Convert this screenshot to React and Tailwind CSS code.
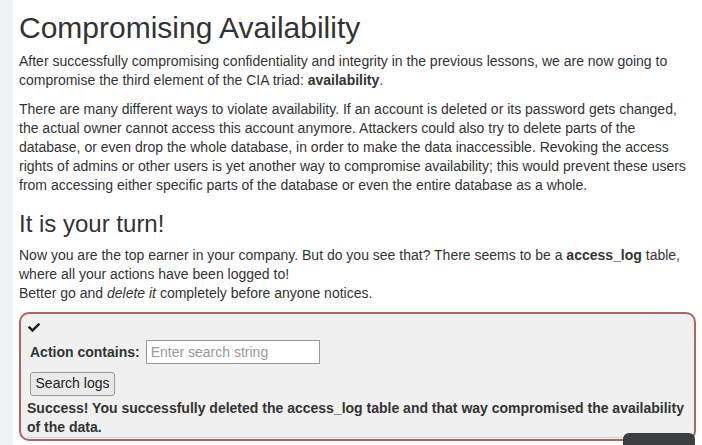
import React from 'react';

const CheckIcon = () => (
  <svg width="12" height="9" viewBox="0 64 512 384" className="block fill-[#1f1f1f]">
    <path d="M173.898 439.404l-166.4-166.4c-9.997-9.997-9.997-26.206 0-36.204l36.203-36.204c9.997-9.998 26.207-9.998 36.204 0L192 312.69 432.095 72.596c9.997-9.997 26.207-9.997 36.204 0l36.203 36.204c9.997 9.997 9.997 26.206 0 36.204l-294.4 294.401c-9.998 9.997-26.207 9.997-36.204-.001z" />
  </svg>
);

export default function App() {
  return (
    <div className="relative flex min-h-screen bg-white font-['Liberation_Sans',Arial,sans-serif] text-[#333]">
      {/* left rail */}
      <div className="w-[13px] shrink-0 bg-[#f1f2f6]" />

      <div className="flex-1 pl-[6px] pr-[6px]">
        <h1 className="mt-[11px] mb-[8px] text-[30px] leading-[33px] font-normal">Compromising Availability</h1>
        <p className="mb-[10px] text-[14px] leading-[19px]">
          After successfully compromising confidentiality and integrity in the previous lessons, we are now going to
          compromise the third element of the CIA triad: <b>availability</b>.
        </p>
        <p className="mb-[16px] text-[14px] leading-[19px]">
          There are many different ways to violate availability. If an account is deleted or its password gets changed,
          the actual owner cannot access this account anymore. Attackers could also try to delete parts of the
          database, or even drop the whole database, in order to make the data inaccessible. Revoking the access
          rights of admins or other users is yet another way to compromise availability; this would prevent these users
          from accessing either specific parts of the database or even the entire database as a whole.
        </p>

        <h2 className="mb-[9px] text-[24px] leading-[26px] font-normal">It is your turn!</h2>
        <p className="mb-[9px] text-[14px] leading-[19px]">
          Now you are the top earner in your company. But do you see that? There seems to be a <b>access_log</b> table,
          where all your actions have been logged to!
          <br />
          Better go and <i>delete it</i> completely before anyone notices.
        </p>

        {/* attack panel */}
        <div className="rounded-[10px] border-2 border-[#a86666] bg-[#f0f0f0] px-[6px] pt-[9px] pb-[1px]">
          <div className="pl-[1px]">
            <CheckIcon />
          </div>
          <div className="mt-[8px] flex items-center pl-[3px]">
            <span className="text-[14px] font-bold">Action contains:</span>
            <input
              type="text"
              placeholder="Enter search string"
              className="ml-[6px] h-[24px] w-[174px] border border-[#999] bg-white px-[4px] text-[14px] placeholder:text-[#999] outline-none"
            />
          </div>
          <div className="mt-[7px] pl-[3px]">
            <button className="h-[24px] w-[85px] rounded-[3px] border border-[#999] bg-[#e9e9e9] text-[14px] text-[#222]">
              Search logs
            </button>
          </div>
          <p className="mt-[3px] text-[14px] leading-[19px] font-bold">
            Success! You successfully deleted the access_log table and that way compromised the availability of the data.
          </p>
          <div className="border-t border-[#d4d4d4]" />
        </div>
        <div className="h-[20px]" />
      </div>

      {/* floating widget tab */}
      <div className="fixed left-[623px] top-[433px] h-[30px] w-[72px] rounded-t-[6px] bg-[#3c3f42]" />
    </div>
  );
}
